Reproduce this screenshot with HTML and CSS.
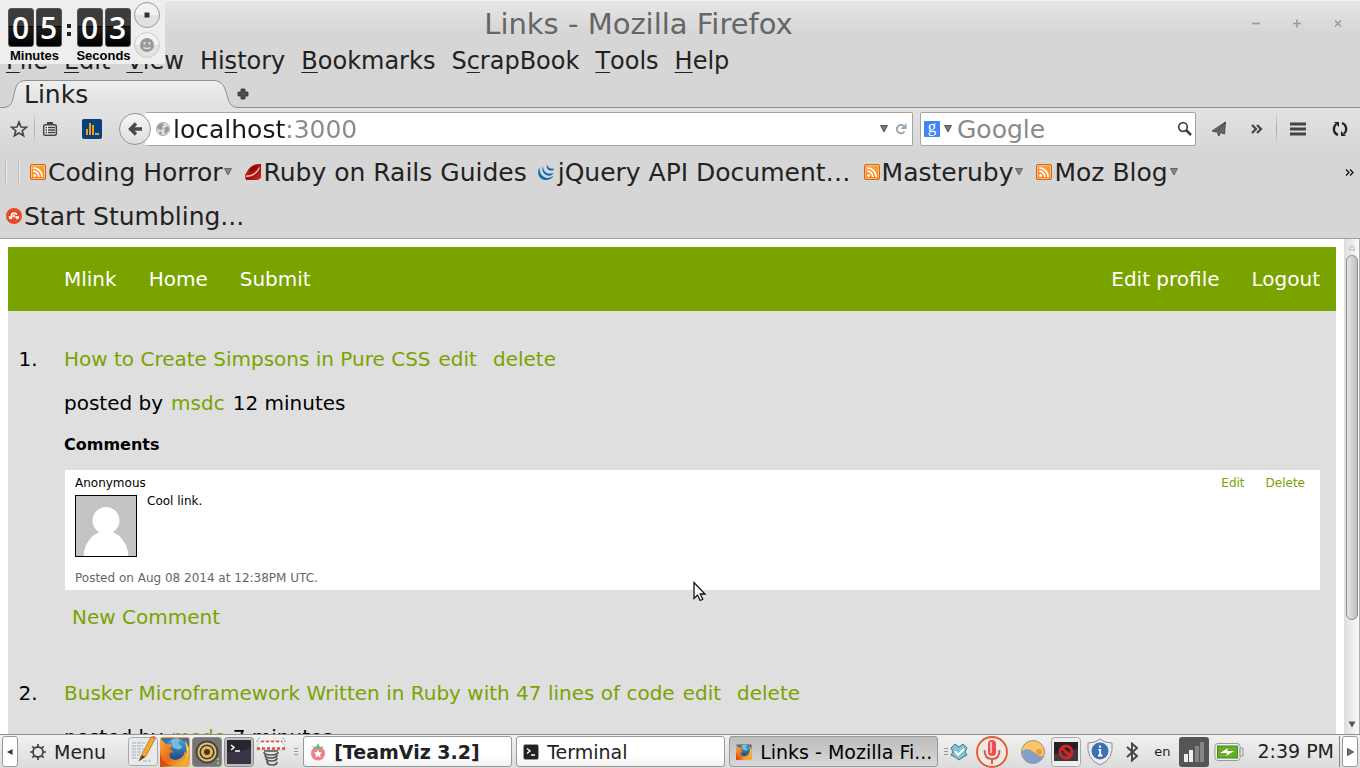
FILE: index.html
```html
<!DOCTYPE html>
<html lang="en">
<head>
<meta charset="utf-8">
<title>Links - Mozilla Firefox</title>
<link rel="stylesheet" href="styles.css">
</head>
<body>
<svg class="defs" aria-hidden="true">
  <defs>
    <linearGradient id="rssFill" x1="0" y1="0" x2="0" y2="1"><stop offset="0" stop-color="#f9a243"/><stop offset="1" stop-color="#f58417"/></linearGradient>
    <linearGradient id="tabFill" x1="0" y1="0" x2="0" y2="1"><stop offset="0" stop-color="#efefef"/><stop offset="1" stop-color="#dfdfdf"/></linearGradient>
    <linearGradient id="fxGlobe" x1="0" y1="0" x2="0" y2="1"><stop offset="0" stop-color="#4fa3d8"/><stop offset="1" stop-color="#123f7c"/></linearGradient>
    <linearGradient id="fxTail" x1="0" y1="0" x2="1" y2="1"><stop offset="0" stop-color="#f6b13a"/><stop offset="0.5" stop-color="#e8661b"/><stop offset="1" stop-color="#f7cf45"/></linearGradient>
    <linearGradient id="rubyFill" x1="0" y1="0" x2="1" y2="1"><stop offset="0" stop-color="#d3261b"/><stop offset="0.6" stop-color="#a50e08"/><stop offset="1" stop-color="#d8392c"/></linearGradient>
    <symbol id="rss" viewBox="0 0 16 16">
      <rect x="0.5" y="0.5" width="15" height="15" rx="1.5" fill="url(#rssFill)" stroke="#d9640a"/>
      <rect x="1.5" y="1.5" width="13" height="13" rx="1" fill="none" stroke="#fbc183"/>
      <circle cx="4.6" cy="11.4" r="1.5" fill="#fff"/>
      <path d="M3.2 7.2a5.7 5.7 0 0 1 5.7 5.7M3.2 3.9a9 9 0 0 1 9 9" fill="none" stroke="#fff" stroke-width="1.8"/>
    </symbol>
    <symbol id="firefox" viewBox="0 0 28 28">
      <rect width="28" height="28" rx="3" fill="#f2a43c"/>
      <path d="M1 1h26v8H1z" fill="#3d6ea5"/>
      <circle cx="15" cy="12.500" r="11" fill="url(#fxGlobe)"/>
      <path d="M10 3q4-3 9-1l-2 4 4 3-3 3-6-2z" fill="#78b9de"/>
      <path d="M1 2l5 5q3-1 6 0l-3 4 4 3-4 1q-1 5 4 6 5 1 9-4l1-4 2 3 1-7q3 9-2 14-7 7-16 4-9-4-8-14z" fill="url(#fxTail)"/>
      <path d="M0 14q1 10 11 13l-11 1z" fill="#d84b15"/>
      <path d="M23 3q7 9 1 18 2-9-1-18z" fill="#fbd251"/>
    </symbol>
    <symbol id="terminal" viewBox="0 0 30 30">
      <rect x="0.5" y="0.5" width="29" height="29" rx="3" fill="#bdbdbd" stroke="#8e8e8e"/>
      <rect x="3" y="3" width="24" height="24" rx="1" fill="#29252f"/>
      <path d="M3 15q12 1 24-4V27H3z" fill="#3a3245"/>
      <path d="M7 8l3 2.5L7 13M11 14h5" fill="none" stroke="#fff" stroke-width="1.5"/>
    </symbol>
    <symbol id="terminalSmall" viewBox="0 0 16 16">
      <rect x="0.5" y="0.5" width="15" height="15" rx="2" fill="#222028" stroke="#9a9a9a"/>
      <path d="M4 4.500l3 2.500-3 2.500M8 11h4" fill="none" stroke="#fff" stroke-width="1.400"/>
    </symbol>
  </defs>
</svg>

<header class="titlebar">
  <h1 class="window-title">Links - Mozilla Firefox</h1>
  <div class="window-controls">
    <button type="button" aria-label="Minimize"><svg width="12" height="12" viewBox="0 0 12 12"><path d="M2 5.500h8" stroke="#999" stroke-width="1.600"/></svg></button>
    <button type="button" aria-label="Maximize"><svg width="12" height="12" viewBox="0 0 12 12"><path d="M2 5.500h8M6 1.500v8" stroke="#999" stroke-width="1.600"/></svg></button>
    <button type="button" aria-label="Close"><svg width="12" height="12" viewBox="0 0 12 12"><path d="M3 2.500l6 6M9 2.500l-6 6" stroke="#999" stroke-width="1.600"/></svg></button>
  </div>
</header>

<nav class="menubar" aria-label="Application menu">
  <button type="button"><u>F</u>ile</button>
  <button type="button"><u>E</u>dit</button>
  <button type="button"><u>V</u>iew</button>
  <button type="button">Hi<u>s</u>tory</button>
  <button type="button"><u>B</u>ookmarks</button>
  <button type="button">S<u>c</u>rapBook</button>
  <button type="button"><u>T</u>ools</button>
  <button type="button"><u>H</u>elp</button>
</nav>

<div class="tabs">
  <button type="button" class="tab">
    <svg class="tab-shape" width="240" height="29" viewBox="0 0 240 29" aria-hidden="true"><path d="M0 27.500H3C20 27.500 8 0.500 26 0.500H213C232 0.500 222 27.500 238 27.500H240V29H0Z" fill="url(#tabFill)"/><path d="M0 27.500H3C20 27.500 8 0.500 26 0.500H213C232 0.500 222 27.500 238 27.500H240" fill="none" stroke="#8f8f8f"/></svg>
    <span class="tab-label">Links</span>
  </button>
  <button type="button" class="new-tab" aria-label="New tab"><svg width="12" height="12" viewBox="0 0 12 12"><path d="M4 1h4v3h3v4H8v3H4V8H1V4h3z" fill="#4d4d4d" stroke="#333" stroke-width="0.800"/></svg></button>
</div>

<div class="toolbar">
  <button type="button" class="tool" aria-label="Bookmark this page"><svg width="18" height="18" viewBox="0 0 18 18"><path d="M9 2l2 5 5.300.3-4.100 3.400 1.400 5.100L9 13l-4.600 2.800 1.400-5.100L1.700 7.300 7 7z" fill="none" stroke="#444" stroke-width="1.600"/></svg></button>
  <span class="separator"></span>
  <button type="button" class="tool" aria-label="Bookmarks list"><svg width="16" height="16" viewBox="0 0 16 16"><rect x="1.700" y="3.700" width="12.600" height="10.600" rx="1.500" fill="#eee" stroke="#444" stroke-width="1.500"/><path d="M5 1h6v3H5z" fill="#444"/><path d="M3.500 6.500h1.500M6 6.500h7M3.500 9h1.500M6 9h7M3.500 11.500h1.500M6 11.500h7" stroke="#444" stroke-width="1.300"/></svg></button>
  <button type="button" class="tool chart" aria-label="Analytics"><svg width="20" height="20" viewBox="0 0 20 20"><rect width="20" height="20" rx="2" fill="#06437d"/><path d="M5 10v6M8 4v12M11 6v10M13 15h4" stroke="#f59b1c" stroke-width="2"/></svg></button>
  <button type="button" class="back" aria-label="Back"><svg width="16" height="16" viewBox="0 0 16 16"><path d="M15 8H4M9 2.500L3.500 8 9 13.500" fill="none" stroke="#4a4a4a" stroke-width="3.400"/></svg></button>
  <div class="field address">
    <svg width="14" height="14" viewBox="0 0 14 14" aria-hidden="true"><circle cx="7" cy="7" r="6.500" fill="#ddd" stroke="#aaa"/><path d="M2 3l4-2 2 2-2 2 1 2-3 1-3-2zM8 6l4-2 1 4-3 4-2-2 1-2zM4 9l2 2-1 2-2-2z" fill="#999"/></svg>
    <input type="text" class="address-input" aria-label="Address" value="localhost:3000">
    <button type="button" aria-label="History"><svg width="8" height="8" viewBox="0 0 8 8"><path d="M0.500 0.500h7L4 7z" fill="#777" stroke="#444" stroke-width="0.800"/></svg></button>
    <button type="button" aria-label="Reload"><svg width="12" height="12" viewBox="0 0 12 12"><path d="M9.500 8.500A4.200 4.200 0 1 1 8.800 3" fill="none" stroke="#98a8b5" stroke-width="2"/><path d="M11.500 0v6h-6z" fill="#98a8b5"/></svg></button>
  </div>
  <div class="field search">
    <button type="button" class="engine" aria-label="Search engine"><span class="engine-logo">g</span><svg width="8" height="8" viewBox="0 0 8 8"><path d="M0.500 0.500h7L4 7z" fill="#777" stroke="#444" stroke-width="0.800"/></svg></button>
    <input type="text" class="search-input" aria-label="Search" placeholder="Google">
    <button type="button" aria-label="Go"><svg width="16" height="16" viewBox="0 0 16 16"><circle cx="6" cy="6" r="4.300" fill="none" stroke="#444" stroke-width="1.700"/><path d="M9 9l5 5" stroke="#444" stroke-width="2.600"/></svg></button>
  </div>
  <button type="button" class="tool send" aria-label="Send"><svg width="16" height="16" viewBox="0 0 16 16"><path d="M14.500 1L1 10l4 1zM14.500 1L6 11.500 8 15l1.500-3.500L13.500 13z" fill="#666" stroke="#444" stroke-width="0.900"/></svg></button>
  <button type="button" class="tool more" aria-label="More tools"><svg width="12" height="10" viewBox="0 0 12 10"><path d="M1 1l4 4-4 4M6 1l4 4-4 4" fill="none" stroke="#444" stroke-width="2.200"/></svg></button>
  <span class="separator"></span>
  <button type="button" class="tool burger" aria-label="Open menu"><svg width="16" height="14" viewBox="0 0 16 14"><path d="M0 2h16M0 7h16M0 12h16" stroke="#444" stroke-width="2.800"/></svg></button>
  <button type="button" class="tool sync" aria-label="Sync"><svg width="16" height="16" viewBox="0 0 16 16"><path d="M6 14A6.300 6.300 0 0 1 4 3.300M10 2a6.300 6.300 0 0 1 2 10.700" fill="none" stroke="#222" stroke-width="2.200"/><path d="M2 1h5v5zM14 15H9v-5z" fill="#222"/></svg></button>
</div>

<nav class="bookmarks" aria-label="Bookmarks">
  <div class="bookmark-row">
    <span class="grip-line"></span><span class="grip-line"></span>
    <button type="button" class="bookmark"><svg width="16" height="16"><use href="#rss"/></svg><span>Coding Horror</span><svg class="caret" width="8" height="8" viewBox="0 0 8 8"><path d="M0.500 0.500h7L4 7z" fill="#888" stroke="#555" stroke-width="0.800"/></svg></button>
    <a href="#" class="bookmark"><svg width="16" height="16" viewBox="0 0 16 16"><path d="M0 11L3 6Q7 0 13 0h3v14l-3 2H1q-1-2-1-5z" fill="url(#rubyFill)"/><path d="M4 6q4-5 9-4.500L10 6 5 8z" fill="#8e0a06"/><path d="M1 11.500q9 0 13.500-9v2.500Q10 13 1 13z" fill="#f0c4be"/></svg><span>Ruby on Rails Guides</span></a>
    <a href="#" class="bookmark jquery"><svg width="16" height="16" viewBox="0 0 16 16"><g fill="#0769ad"><path d="M1.500 3C-1 8 0 13 4 15q5 2.500 10-1 1-1 1-2-4 3-8 1.500Q1 11 1.500 3z"/><path d="M5 2Q3.500 6 6 9.500q4 3.500 8 1.500l1.500-2q-4 1.500-7 0Q5 7 5 2z"/><path d="M9 .5Q8 3 9.500 5q2.500 2.500 6 1l.5-1.500q-3 .5-4.500-.5Q9.500 3 9 .5z"/></g></svg><span>jQuery API Document…</span></a>
    <button type="button" class="bookmark"><svg width="16" height="16"><use href="#rss"/></svg><span>Masteruby</span><svg class="caret" width="8" height="8" viewBox="0 0 8 8"><path d="M0.500 0.500h7L4 7z" fill="#888" stroke="#555" stroke-width="0.800"/></svg></button>
    <button type="button" class="bookmark"><svg width="16" height="16"><use href="#rss"/></svg><span>Moz Blog</span><svg class="caret" width="8" height="8" viewBox="0 0 8 8"><path d="M0.500 0.500h7L4 7z" fill="#888" stroke="#555" stroke-width="0.800"/></svg></button>
    <button type="button" class="overflow" aria-label="More bookmarks"><svg width="9" height="7" viewBox="0 0 9 7"><path d="M1 .5l3 3-3 3M5 .5l3 3-3 3" fill="none" stroke="#111" stroke-width="1.300"/></svg></button>
  </div>
  <div class="bookmark-row second">
    <a href="#" class="bookmark"><svg width="16" height="16" viewBox="0 0 16 16"><circle cx="8" cy="8" r="8" fill="#eb4924"/><path d="M3.700 8v1.300q0 1.200 1 1.200t1-1.200V7Q5.700 5 8 5t2.300 2M8 6.500v2.800M10.300 8v1.300q0 1.200 1 1.200t1-1.200V8" fill="none" stroke="#fff" stroke-width="1.700"/></svg><span>Start Stumbling...</span></a>
  </div>
</nav>

<div class="viewport">
  <main class="page">
    <nav class="site-nav" aria-label="Site">
      <a href="#">Mlink</a>
      <a href="#">Home</a>
      <a href="#">Submit</a>
      <a href="#" class="push">Edit profile</a>
      <a href="#">Logout</a>
    </nav>
    <ol class="links">
      <li>
        <div class="line"><a href="#">How to Create Simpsons in Pure CSS</a><a href="#" class="action">edit</a><a href="#">delete</a></div>
        <div class="line meta"><span>posted by</span><a href="#">msdc</a><span>12 minutes</span></div>
        <h2 class="comments-title">Comments</h2>
        <article class="comment">
          <div class="comment-head"><span>Anonymous</span><span class="comment-actions"><a href="#">Edit</a><a href="#">Delete</a></span></div>
          <div class="comment-body">
            <svg class="avatar" width="62" height="62" viewBox="0 0 62 62" role="img" aria-label="Anonymous"><rect x="0.500" y="0.500" width="61" height="61" fill="#c3c3c3"/><circle cx="31" cy="25.500" r="13.500" fill="#fff"/><path d="M8.500 62C9 47 19 36 31 36s22 11 22.500 26z" fill="#fff"/><rect x="0.500" y="0.500" width="61" height="61" fill="none" stroke="#000"/></svg>
            <p>Cool link.</p>
          </div>
          <p class="comment-date">Posted on Aug 08 2014 at 12:38PM UTC.</p>
        </article>
        <a href="#" class="new-comment">New Comment</a>
      </li>
      <li>
        <div class="line"><a href="#">Busker Microframework Written in Ruby with 47 lines of code</a><a href="#" class="action">edit</a><a href="#">delete</a></div>
        <div class="line meta"><span>posted by</span><a href="#">msdc</a><span>7 minutes</span></div>
      </li>
    </ol>
  </main>
  <div class="scrollbar" aria-hidden="true">
    <svg width="8" height="7" viewBox="0 0 8 7"><path d="M1 6l3-5 3 5z" fill="#eee" stroke="#bbb"/></svg>
    <div class="track"><div class="thumb"></div></div>
    <svg width="8" height="7" viewBox="0 0 8 7"><path d="M.5.500h7L4 6.500z" fill="#555"/></svg>
  </div>
</div>

<footer class="taskbar">
  <button type="button" class="edge" aria-label="Hide panel left"><svg width="6" height="6" viewBox="0 0 6 6"><path d="M5.500 0v6L0 3z" fill="#333"/></svg></button>
  <button type="button" class="start"><svg width="18" height="18" viewBox="0 0 18 18"><circle cx="9" cy="9" r="5" fill="none" stroke="#444" stroke-width="1.800"/><path d="M9 1v3M9 14v3M1 9h3M14 9h3M3.300 3.300l2.200 2.200M12.500 12.500l2.200 2.200M14.700 3.300l-2.200 2.200M5.500 12.500l-2.200 2.200" stroke="#444" stroke-width="1.700"/></svg><span>Menu</span></button>
  <div class="launchers">
    <button type="button" aria-label="Text editor"><svg width="30" height="31" viewBox="0 0 30 31"><rect x="0.500" y="1.500" width="29" height="28" rx="3" fill="#e9e9e9" stroke="#aaa"/><path d="M4 7h13M4 10h11M4 13h12M4 16h9M4 19h8M4 22h6M15 25h8" stroke="#9bb0c5" stroke-dasharray="4 1"/><path d="M11 25l3-7L23 1l4 2-9 17z" fill="#f4a92f" stroke="#b86f13" stroke-width="0.800"/><path d="M11 25l3-6 3 2z" fill="#444"/><path d="M23 1l2-1 3 1-1 3z" fill="#e07070"/></svg></button>
    <button type="button" aria-label="Firefox"><svg width="30" height="30"><use href="#firefox"/></svg></button>
    <button type="button" aria-label="Audio player"><svg width="30" height="30" viewBox="0 0 30 30"><rect x="0.500" y="0.500" width="29" height="29" rx="3" fill="#777570" stroke="#8d8d8d"/><circle cx="15" cy="15" r="11" fill="#55534f" stroke="#3a3937"/><circle cx="15" cy="15" r="8.500" fill="#3c3a37" stroke="#e0c078" stroke-width="1.800"/><circle cx="15" cy="15" r="6" fill="#ecb646"/><circle cx="15" cy="15" r="3" fill="#3a3530"/><path d="M26 21v2M26 25v2" stroke="#8ad04a" stroke-width="2"/></svg></button>
    <button type="button" aria-label="Terminal"><svg width="30" height="30"><use href="#terminal"/></svg></button>
    <button type="button" aria-label="Spring"><svg width="30" height="30" viewBox="0 0 30 30"><path d="M4 4h22l4 9H0z" fill="#f8f8f8" stroke="#ccc"/><path d="M5 4.500h21" stroke="#e04b3b" stroke-width="1.500" stroke-dasharray="3 2"/><path d="M1 11.500h29" stroke="#e04b3b" stroke-width="2.500" stroke-dasharray="3 2"/><path d="M1 5q0-3 3-4M29 5q0-3-3-4" fill="none" stroke="#5f9be0" stroke-dasharray="2 1"/><path d="M8 14h14M8 15q0 3 7 3t7-3M9 18q0 3 6 3t6-3M10 21q0 3 5.500 3t5.500-3M11 24q0 4 5 4t5-3" fill="none" stroke="#555" stroke-width="1.700"/></svg></button>
  </div>
  <span class="grip"></span>
  <button type="button" class="task strong"><svg width="16" height="18" viewBox="0 0 16 18"><circle cx="8" cy="10.500" r="7" fill="#ee7f8d"/><path d="M2 3l4 1 2-4 2 4 4-1-3 3H5z" fill="#73b874"/><path d="M8 6.500l1.200 2.700 3 .3-2.200 2 .6 3L8 13l-2.600 1.500.6-3-2.200-2 3-.3z" fill="#fff"/></svg><span>[TeamViz 3.2]</span></button>
  <button type="button" class="task"><svg width="16" height="16"><use href="#terminalSmall"/></svg><span>Terminal</span></button>
  <button type="button" class="task active"><svg width="16" height="16"><use href="#firefox"/></svg><span>Links - Mozilla Fi...</span></button>
  <span class="grip"></span>
  <div class="tray">
    <svg width="18" height="18" viewBox="0 0 18 18"><path d="M5 1l4 3 4-3 4 4-2 4 2 3-4 2-4 3-4-3-4-2 2-3-2-4z" fill="#7fc3d9" stroke="#48737f"/><path d="M5 8l3 4 6-6" fill="none" stroke="#fff" stroke-width="2"/></svg>
    <svg class="mic" width="32" height="32" viewBox="0 0 32 32"><circle cx="16" cy="16" r="15" fill="#f1e9e5" stroke="#e2582f" stroke-width="1.800"/><rect x="12" y="4" width="8" height="16" rx="4" fill="#ee4e53"/><path d="M15 6v11" stroke="#f8b8b8" stroke-width="2"/><path d="M8.500 14q0 9 7.500 9t7.500-9M16 23v5" fill="none" stroke="#de5b36" stroke-width="2"/></svg>
    <svg width="24" height="24" viewBox="0 0 24 24"><circle cx="12" cy="12" r="11.500" fill="#fbc568" stroke="#949494"/><circle cx="18" cy="12" r="3" fill="#f39a3e"/><path d="M.7 12Q4 8 8 9.500 11 10 15 14q4 3 7.500 2Q19 23.500 12 23.500 2 23.500.7 12z" fill="#849ec8"/></svg>
    <svg class="blocked" width="30" height="30" viewBox="0 0 30 30"><rect x="0.500" y="0.500" width="29" height="29" rx="3" fill="#eee" stroke="#a9a9a9"/><path d="M3 5h24v19H3z" fill="#222"/><path d="M3 17l24-5v12H3z" fill="#3b3b3b"/><circle cx="15" cy="15" r="6" fill="none" stroke="#d92323" stroke-width="2.800"/><path d="M11 11l8 8" stroke="#d92323" stroke-width="2.800"/></svg>
    <svg width="28" height="28" viewBox="0 0 28 28"><path d="M14 1q4 4 12 4 2 16-12 22Q0 21 2 5 10 5 14 1z" fill="#eee" stroke="#8c8c8c"/><circle cx="14" cy="13" r="8.500" fill="#3c70b5"/><path d="M14 7.500v2.200M12.500 11.800h1.700v5.500M12 17.500h4.500" fill="none" stroke="#fff" stroke-width="1.800"/></svg>
    <svg class="bluetooth" width="14" height="20" viewBox="0 0 14 20"><path d="M2 5l10 9-5 4.500v-17L12 6 2 15" fill="none" stroke="#444" stroke-width="1.900"/></svg>
    <span class="lang">en</span>
    <svg width="30" height="30" viewBox="0 0 30 30"><rect width="30" height="30" rx="3" fill="#555"/><path d="M5 17h4v8H5zM10 13h4v12h-4z" fill="#eee"/><path d="M16 9h4v16h-4zM21 5h4v20h-4z" fill="#858585"/></svg>
    <svg class="battery" width="30" height="20" viewBox="0 0 30 20"><rect x="1" y="1.500" width="25" height="17" rx="3" fill="#f1f1f1" stroke="#999"/><path d="M26 6h3v8h-3z" fill="#ddd" stroke="#999"/><rect x="3.500" y="4" width="20" height="12" fill="#66ad28" stroke="#4a8717"/><path d="M6 11l8-5-1 3h7l-8 5 1-3z" fill="#fff"/></svg>
  </div>
  <time class="clock">2:39 PM</time>
  <button type="button" class="edge" aria-label="Hide panel right"><svg width="7" height="8" viewBox="0 0 7 8"><path d="M.5.500v7L6.500 4z" fill="#777" stroke="#333" stroke-width="0.800"/></svg></button>
</footer>

<aside class="timer" aria-label="Timer">
  <div class="unit"><div class="digits"><span>0</span><span>5</span></div><span class="unit-label">Minutes</span></div>
  <span class="colon"></span>
  <div class="unit"><div class="digits"><span>0</span><span>3</span></div><span class="unit-label">Seconds</span></div>
  <div class="timer-buttons">
    <button type="button" aria-label="Stop"><svg width="6" height="6" viewBox="0 0 6 6"><path d="M.5.500h5v5h-5z" fill="#333"/></svg></button>
    <button type="button" class="faded" aria-label="Void"><svg width="14" height="14" viewBox="0 0 14 14"><circle cx="7" cy="7" r="7" fill="#999"/><path d="M4.500 4v2.500M9.500 4v2.500" stroke="#ddd" stroke-width="1.800"/><path d="M3.500 9.500q3.500 2 7 0" fill="none" stroke="#ddd" stroke-width="1.500"/></svg></button>
  </div>
</aside>

<svg class="pointer" width="14" height="22" viewBox="0 0 14 22" aria-hidden="true"><path d="M1 1.500v16l3.500-3.500 2.700 5.500 2.600-1.200L7.200 13H12z" fill="#fff" stroke="#111" stroke-width="1.300"/></svg>
</body>
</html>
```

FILE: styles.css
```css
* { box-sizing: border-box; }

body {
  margin: 0;
  height: 100vh;
  display: flex;
  flex-direction: column;
  overflow: hidden;
  position: relative;
  background: #d6d6d6;
  color: #222;
  font-family: "DejaVu Sans", sans-serif;
  font-size: 25px;
}

button, input {
  margin: 0;
  padding: 0;
  border: 0;
  background: none;
  color: inherit;
  font: inherit;
}

button { display: flex; align-items: center; }
a { text-decoration: none; color: inherit; }
svg { display: block; flex: none; }
p { margin: 0; }
.defs { position: absolute; width: 0; height: 0; }

/* Window frame */
.titlebar {
  display: flex;
  align-items: center;
  height: 46px;
  flex: none;
  padding: 0 16px 0 27px;
  background: linear-gradient(#e6e6e6, #d6d6d6 70%);
  border-top: 1px solid #f4f4f4;
}
.window-title {
  flex: 1;
  margin: 0;
  text-align: center;
  font-size: 29px;
  font-weight: normal;
  line-height: 36px;
  color: #666;
}
.window-controls { display: flex; gap: 29px; }

.menubar {
  display: flex;
  gap: 16px;
  flex: none;
  height: 34px;
  padding: 0 6px;
  font-size: 24px;
  line-height: 30px;
  align-items: flex-start;
}
.menubar u { text-decoration-thickness: 1px; text-underline-offset: 3px; }

.tabs {
  display: flex;
  align-items: center;
  height: 28px;
  flex: none;
  border-bottom: 1px solid #8f8f8f;
}
.tab { position: relative; width: 237px; height: 28px; padding: 2px 0 0 24px; }
.tab-shape { position: absolute; left: 0; top: 0; }
.tab-label { position: relative; }

/* Toolbar */
.toolbar {
  display: flex;
  align-items: center;
  height: 42px;
  flex: none;
  padding: 0 11px 0 10px;
  background: linear-gradient(#e3e3e3, #d6d6d6);
}
.separator { width: 1px; height: 32px; background: linear-gradient(#d6d6d6, #a0aab4, #d6d6d6); margin: 0 7px 0 6px; }
.chart { margin: 0 17px 0 24px; }
.back {
  position: relative;
  z-index: 1;
  justify-content: center;
  width: 32px;
  height: 32px;
  margin-right: -6px;
  border: 1px solid #8d98a5;
  border-radius: 50%;
  background: linear-gradient(#f6f6f6, #dedede);
}
.field {
  display: flex;
  align-items: center;
  height: 34px;
  border: 1px solid #a4a4a4;
  border-radius: 2px;
  background: #fff;
}
.field input { flex: 1; min-width: 0; height: 30px; outline: 0; }
.address { flex: 1; padding: 0 5px 0 10px; gap: 7px; border-left-color: #fff; }
.address svg + input { margin-left: -4px; }
.address-input {
  color: transparent;
  background: linear-gradient(to right, #1a1a1a 112px, #8a8a8a 112px);
  background-clip: text;
  -webkit-background-clip: text;
}
.search { width: 276px; margin-left: 7px; padding: 0 2px 0 3px; }
.engine { gap: 4px; margin-right: 5px; }
.engine-logo {
  width: 16px;
  height: 16px;
  border-radius: 1px;
  background: #4285f4;
  color: #fff;
  font: 17px/12px "Liberation Serif", serif;
  text-align: center;
}
.search-input::placeholder { color: #8a8a8a; opacity: 1; }
.send { margin-left: 15px; }
.more { margin: 0 7px 0 24px; }
.burger { margin-left: 6px; }
.sync { margin: 0 1px 0 26px; }

/* Bookmarks */
.bookmarks { flex: none; border-bottom: 1px solid #a0a0a0; }
.bookmark-row { display: flex; align-items: center; gap: 12px; height: 44px; padding: 0 6px 0 5px; }
.second { padding-left: 6px; }
.grip-line { width: 1px; height: 22px; background: #bbb; border-right: 1px solid #eee; box-sizing: content-box; }
.grip-line + .grip-line { margin-right: -2px; margin-left: -1px; }
.bookmark { display: flex; align-items: center; gap: 2px; }
.bookmark + .bookmark { margin-left: 1px; }
.bookmark + .jquery { margin-left: -1px; }
.jquery { gap: 4px; }
.overflow { margin-left: auto; }

/* Page */
.viewport { display: flex; flex: 1; min-height: 0; background: #fff; }
.page { flex: 1; margin: 8px 8px 0; overflow: hidden; background: #dfdfdf; color: #000; font-size: 20px; line-height: 24px; }
.site-nav { display: flex; align-items: center; gap: 32px; height: 64px; padding: 0 16px 0 56px; background: #7aa300; color: #fff; }
.push { margin-left: auto; }
.links { margin: 0; padding: 36px 16px 0 36px; }
.links li { padding-left: 20px; margin-bottom: 52px; }
.links a { color: #7aa300; }
.line { display: flex; gap: 8px; }
.action { margin-right: 8px; }
.meta { margin-top: 20px; }
.comments-title { margin: 20px 0 15px; font-size: 16px; line-height: 20px; }
.comment { padding: 5px 15px 3px 10px; margin-left: 1px; background: #fff; font-size: 12px; line-height: 17px; }
.comment-head { display: flex; justify-content: space-between; }
.comment-actions { display: flex; gap: 21px; }
.comment-body { display: flex; gap: 10px; margin: 3px 0 13px; line-height: 12px; }
.comment-date { color: #666; }
.new-comment { display: block; margin: 15px 0 0 8px; }

.scrollbar {
  display: flex;
  flex-direction: column;
  align-items: center;
  gap: 4px;
  width: 16px;
  padding: 5px 0 6px;
  background: linear-gradient(to right, #ddd, #fafafa);
  border-right: 1px solid #b3ada5;
}
.track { flex: 1; width: 12px; }
.thumb { height: 79%; border: 1px solid #8e8e8e; border-radius: 6px; background: linear-gradient(to right, #e6e6e6, #bfbfbf); }

/* Taskbar */
.taskbar {
  display: flex;
  align-items: center;
  flex: none;
  height: 34px;
  border-top: 1px solid #8f8f8f;
  background: linear-gradient(#f1f1f1, #dcdcdc);
  font-size: 19px;
  padding: 0 2px;
}
.edge { width: 16px; height: 31px; justify-content: center; background: #fff; border: 1px solid #999; border-radius: 3px; }
.start { gap: 7px; margin: 0 22px 0 11px; }
.launchers { display: flex; align-items: center; gap: 2px; }
.grip { width: 4px; height: 8px; margin: 0 5px 0 8px; background: repeating-linear-gradient(#999 0 1px, transparent 1px 3px); }
.task {
  flex: 1;
  max-width: 209px;
  min-width: 0;
  height: 31px;
  margin-right: 4px;
  padding: 0 6px;
  gap: 8px;
  border: 1px solid #999;
  border-radius: 3px;
  background: linear-gradient(#fff 70%, #f0f0f0);
  white-space: nowrap;
}
.active { background: linear-gradient(#bcbcbc, #d8d8d8); color: #000; }
.strong { font-weight: bold; }
.active + .grip { margin: 0 2px; }
.tray { display: flex; align-items: center; gap: 5px; }
.mic { margin: 0 8px 0 3px; }
.blocked { margin-left: 1px; }
.bluetooth { margin-left: 6px; }
.lang { font-size: 13px; margin: 0 4px 0 10px; }
.clock { margin-left: auto; padding-right: 5px; border-right: 1px solid #888; line-height: 31px; margin-right: 2px; }

/* Countdown overlay */
.timer {
  position: absolute;
  left: 0;
  top: 0;
  display: flex;
  width: 165px;
  height: 64px;
  padding: 8px 0 0 8px;
  background: #eee;
}
.unit { display: flex; flex-direction: column; align-items: center; width: 53px; }
.digits { display: flex; gap: 2px; }
.digits span {
  width: 26px;
  height: 39px;
  border: 1px solid #555;
  border-radius: 3px;
  background: linear-gradient(#3c3c3c 0 47%, #000 47% 50%, #1d1d1d 50%, #000);
  color: #fff;
  font: 600 30px/38px "Open Sans", sans-serif;
  text-align: center;
}
.unit-label { font: bold 13px/18px "Liberation Sans", sans-serif; color: #000; white-space: nowrap; }
.colon { width: 4px; height: 12px; margin: 16px 6px 0; background: linear-gradient(#222 0 4px, transparent 4px 8px, #222 8px); }
.timer-buttons { display: flex; flex-direction: column; gap: 4px; margin: -6px 0 0 4px; }
.timer-buttons button { justify-content: center; width: 26px; height: 26px; border: 1px solid #999; border-radius: 50%; background: linear-gradient(#f2f2f2 50%, #e2e2e2 50%); }
.timer-buttons .faded { border-color: #ccc; }

.pointer { position: absolute; left: 693px; top: 581px; }
```
